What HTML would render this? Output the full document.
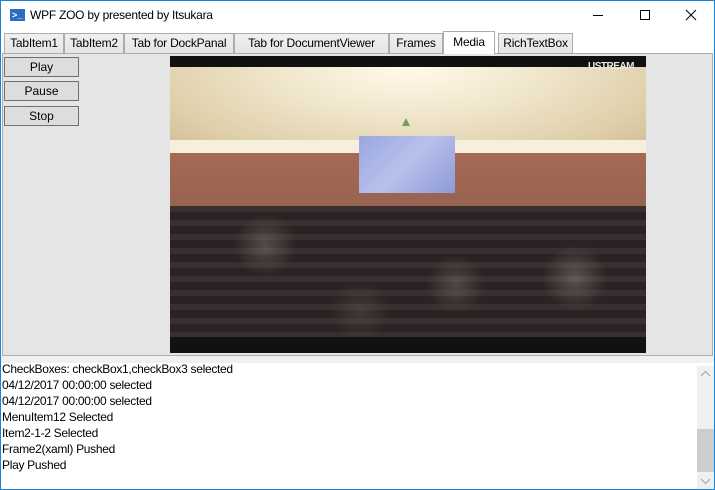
<!DOCTYPE html>
<html><head><meta charset="utf-8"><style>
*{margin:0;padding:0;box-sizing:border-box}
body{width:715px;height:490px;overflow:hidden;background:#fff;font-family:"Segoe UI","Liberation Sans",sans-serif;font-size:12px;color:#000;position:relative}
.win{position:absolute;left:0;top:0;width:715px;height:490px;border:1px solid #1883d7}
.abs{position:absolute}
.tab{position:absolute;top:33px;height:20px;border:1px solid #acacac;border-bottom:none;font-size:12px;text-align:center;line-height:18px;background:linear-gradient(#f0f0f0,#e5e5e5);letter-spacing:-0.2px}
.btn{position:absolute;left:4px;width:75px;height:20px;border:1px solid #707070;background:#dddddd;text-align:center;line-height:18px;font-size:12px}
.log div{height:16px;line-height:16px;font-size:12px;white-space:nowrap;letter-spacing:-0.3px}
</style></head><body>
<div class="win"></div>
<div class="abs" style="left:10px;top:9px;width:15px;height:12px;background:#2b6cc4"></div>
<div class="abs" style="left:12px;top:10px;color:#fff;font-size:9px;line-height:10px;font-weight:bold">&gt;_</div>
<div class="abs" style="left:30px;top:7px;font-size:12px;line-height:16px;letter-spacing:-0.25px">WPF ZOO by presented by Itsukara</div>
<div class="abs" style="left:593px;top:15px;width:10px;height:1px;background:#000"></div>
<div class="abs" style="left:640px;top:10px;width:10px;height:10px;border:1px solid #000"></div>
<svg class="abs" style="left:685px;top:9px" width="12" height="12"><path d="M1 1L11 11M11 1L1 11" stroke="#000" stroke-width="1"/></svg>
<div class="tab" style="left:4px;width:60px">TabItem1</div>
<div class="tab" style="left:64px;width:60px">TabItem2</div>
<div class="tab" style="left:124px;width:110px">Tab for DockPanal</div>
<div class="tab" style="left:234px;width:155px">Tab for DocumentViewer</div>
<div class="tab" style="left:389px;width:54px">Frames</div>
<div class="tab" style="left:443px;top:31px;height:23px;width:52px;background:#fff;z-index:2;line-height:20px">Media</div>
<div class="tab" style="left:498px;width:75px">RichTextBox</div>
<div class="abs" style="left:2px;top:53px;width:711px;height:303px;border:1px solid #acacac;background:#e5e5e5"></div>
<div class="btn" style="top:57px">Play</div>
<div class="btn" style="top:81px">Pause</div>
<div class="btn" style="top:106px">Stop</div>
<div class="abs" style="left:170px;top:56px;width:476px;height:297px;background:#111;overflow:hidden">
 <div class="abs" style="left:0;top:11px;width:476px;height:86px;background:radial-gradient(ellipse at 50% 0%,#fffaea 0%,#f0e6cc 40%,#e0d0ac 75%,#d0bc96 100%)"></div>
 <div class="abs" style="left:0;top:84px;width:476px;height:16px;background:#f6efdc"></div>
 <div class="abs" style="left:0;top:97px;width:476px;height:72px;background:linear-gradient(#a56a55,#92604f)"></div>
 <div class="abs" style="left:0;top:150px;width:476px;height:131px;background:repeating-linear-gradient(#3a2e2e 0 6px,#2a2224 6px 14px),#2e2526"></div>
 <div class="abs" style="left:0;top:150px;width:476px;height:131px;background:radial-gradient(circle at 20% 30%,rgba(150,140,130,.4),transparent 8%),radial-gradient(circle at 60% 60%,rgba(150,140,130,.35),transparent 10%),radial-gradient(circle at 85% 55%,rgba(180,170,160,.35),transparent 8%),radial-gradient(circle at 40% 80%,rgba(120,110,100,.3),transparent 10%)"></div>
 <div class="abs" style="left:189px;top:80px;width:96px;height:57px;background:linear-gradient(135deg,#9aa8e0,#b8c0ec 50%,#8e9ad6)"></div>
 <div class="abs" style="left:232px;top:62px;width:0;height:0;border-left:4px solid transparent;border-right:4px solid transparent;border-bottom:8px solid #7b9a5a"></div>
 <div class="abs" style="left:418px;top:5px;color:#e8e8e8;font-size:10px;font-weight:bold;letter-spacing:-0.5px">USTREAM</div>
</div>
<div class="abs" style="left:1px;top:356px;width:713px;height:7px;background:#f0f0f0"></div>
<div class="abs log" style="left:2px;top:361px;width:695px;height:127px;overflow:hidden">
<div>CheckBoxes: checkBox1,checkBox3 selected</div>
<div>04/12/2017 00:00:00 selected</div>
<div>04/12/2017 00:00:00 selected</div>
<div>MenuItem12 Selected</div>
<div>Item2-1-2 Selected</div>
<div>Frame2(xaml) Pushed</div>
<div>Play Pushed</div>
</div>
<div class="abs" style="left:697px;top:366px;width:17px;height:123px;background:#f0f0f0"></div>
<div class="abs" style="left:697px;top:429px;width:17px;height:43px;background:#cdcdcd"></div>
<svg class="abs" style="left:700px;top:370px" width="11" height="8"><path d="M1 6L5.5 1.5L10 6" stroke="#a0a0a0" fill="none"/></svg>
<svg class="abs" style="left:700px;top:477px" width="11" height="8"><path d="M1 2L5.5 6.5L10 2" stroke="#a0a0a0" fill="none"/></svg>
</body></html>
